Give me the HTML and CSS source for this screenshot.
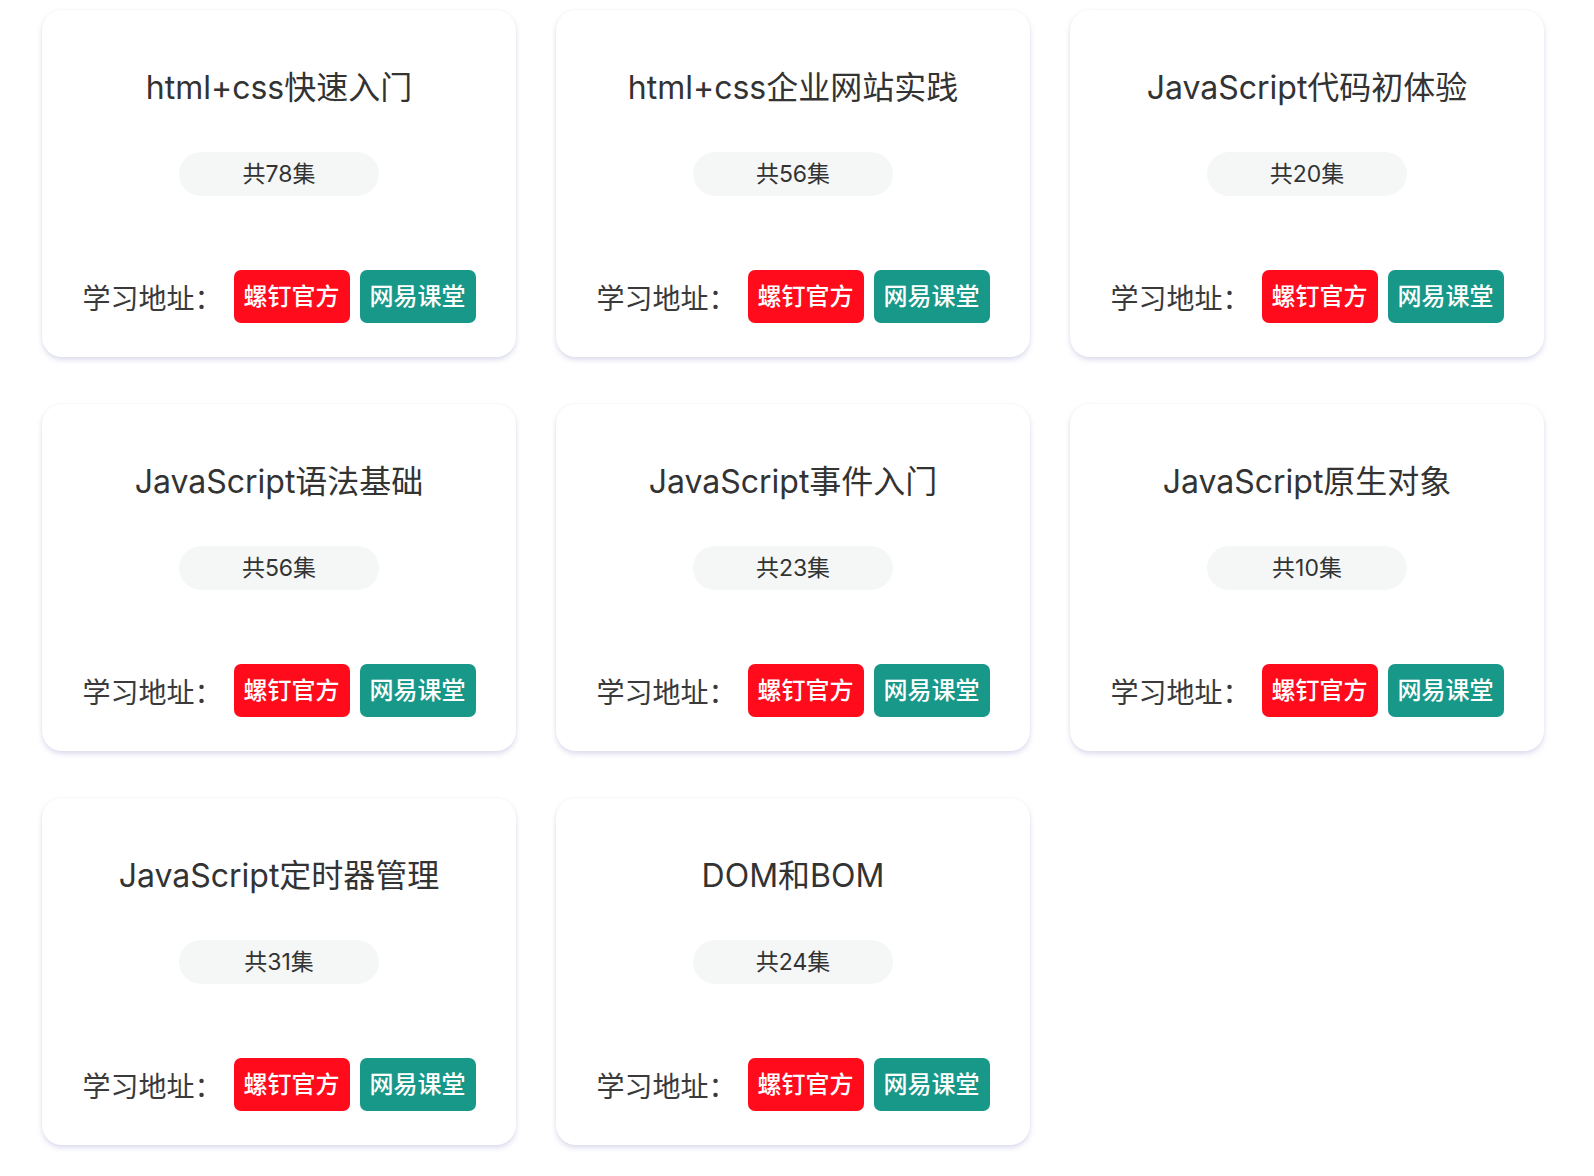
FILE: index.html
```html
<!DOCTYPE html>
<html lang="zh-CN">
<head>
<meta charset="utf-8">
<title>课程列表</title>
<link rel="stylesheet" href="styles.css">
</head>
<body>
<div class="grid">
  <div class="card">
    <h3 class="title">html+css快速入门</h3>
    <div class="count">共78集</div>
    <div class="links"><span class="label">学习地址：</span><a class="btn red" href="#">螺钉官方</a><a class="btn teal" href="#">网易课堂</a></div>
  </div>
  <div class="card">
    <h3 class="title">html+css企业网站实践</h3>
    <div class="count">共56集</div>
    <div class="links"><span class="label">学习地址：</span><a class="btn red" href="#">螺钉官方</a><a class="btn teal" href="#">网易课堂</a></div>
  </div>
  <div class="card">
    <h3 class="title">JavaScript代码初体验</h3>
    <div class="count">共20集</div>
    <div class="links"><span class="label">学习地址：</span><a class="btn red" href="#">螺钉官方</a><a class="btn teal" href="#">网易课堂</a></div>
  </div>
  <div class="card">
    <h3 class="title">JavaScript语法基础</h3>
    <div class="count">共56集</div>
    <div class="links"><span class="label">学习地址：</span><a class="btn red" href="#">螺钉官方</a><a class="btn teal" href="#">网易课堂</a></div>
  </div>
  <div class="card">
    <h3 class="title">JavaScript事件入门</h3>
    <div class="count">共23集</div>
    <div class="links"><span class="label">学习地址：</span><a class="btn red" href="#">螺钉官方</a><a class="btn teal" href="#">网易课堂</a></div>
  </div>
  <div class="card">
    <h3 class="title">JavaScript原生对象</h3>
    <div class="count">共10集</div>
    <div class="links"><span class="label">学习地址：</span><a class="btn red" href="#">螺钉官方</a><a class="btn teal" href="#">网易课堂</a></div>
  </div>
  <div class="card">
    <h3 class="title">JavaScript定时器管理</h3>
    <div class="count">共31集</div>
    <div class="links"><span class="label">学习地址：</span><a class="btn red" href="#">螺钉官方</a><a class="btn teal" href="#">网易课堂</a></div>
  </div>
  <div class="card">
    <h3 class="title">DOM和BOM</h3>
    <div class="count">共24集</div>
    <div class="links"><span class="label">学习地址：</span><a class="btn red" href="#">螺钉官方</a><a class="btn teal" href="#">网易课堂</a></div>
  </div>
</div>
</body>
</html>
```

FILE: styles.css
```css
* {
  box-sizing: border-box;
}

html, body {
  margin: 0;
  padding: 0;
  background: #ffffff;
}

body {
  font-family: Inter, "Noto Sans CJK SC", sans-serif;
  color: #333333;
}

.grid {
  display: grid;
  grid-template-columns: repeat(3, 474px);
  column-gap: 40px;
  row-gap: 47px;
  padding: 10px 0 30px 42px;
}

.card {
  height: 347px;
  background: #ffffff;
  border-radius: 20px;
  box-shadow: 0 3px 5px rgba(190, 190, 225, 0.5), 0 0 3px rgba(0, 0, 0, 0.04);
  display: flex;
  flex-direction: column;
  align-items: center;
  padding-top: 58px;
}

.title {
  margin: 0;
  font-size: 32px;
  font-weight: 400;
  line-height: 40px;
  color: #333333;
}

.count {
  margin-top: 44px;
  width: 200px;
  height: 44px;
  border-radius: 22px;
  background: #f5f7f7;
  font-size: 23px;
  line-height: 44px;
  text-align: center;
  color: #333333;
}

.links {
  margin-top: 74px;
  display: flex;
  align-items: center;
  justify-content: center;
  gap: 10px;
}

.label {
  font-size: 28px;
  color: #3a3a3a;
  margin-right: 1px;
}

.btn {
  display: block;
  height: 53px;
  padding: 0 10px;
  border-radius: 7px;
  font-size: 24px;
  font-weight: 500;
  line-height: 53px;
  color: #ffffff;
  text-decoration: none;
}

.red {
  background: #ff0b1c;
}

.teal {
  background: #179888;
}
```
